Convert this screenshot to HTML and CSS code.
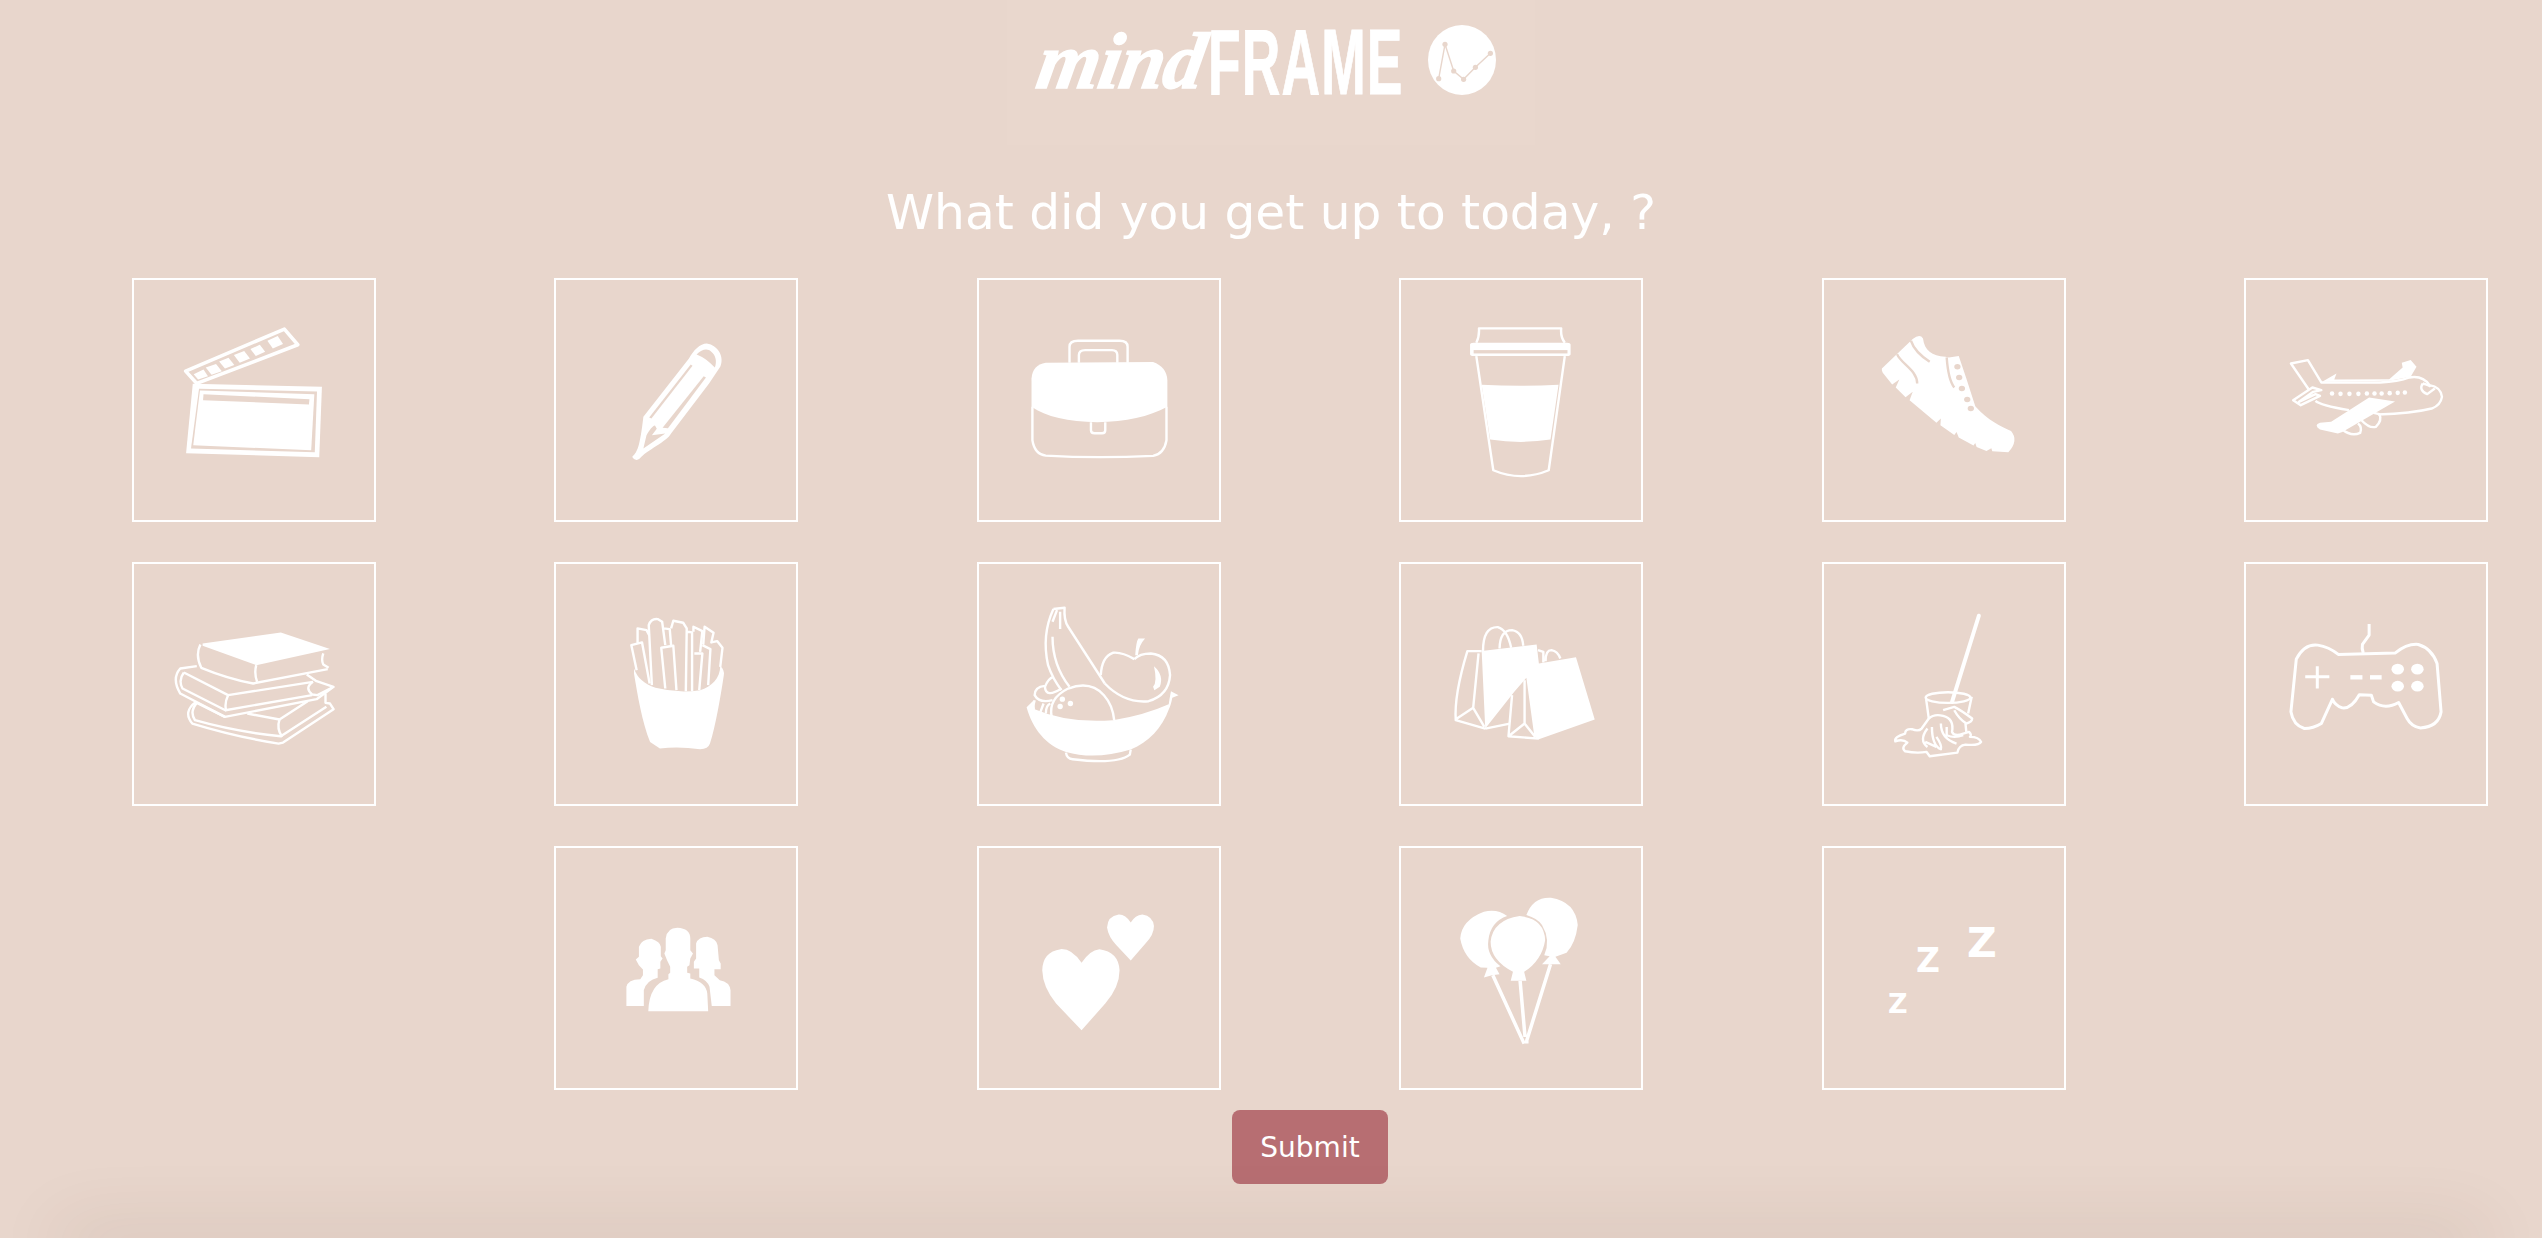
FILE: index.html
```html
<!DOCTYPE html>
<html lang="en">

<head>
    <meta charset="UTF-8">
    <meta name="viewport" content="width=device-width, initial-scale=1.0">
    <title>mindFRAME</title>
    <link rel="stylesheet" href="styles.css">
</head>

<body>
    <header class="brand">
        <div class="logo">
            <span class="logo-mind"><span class="logo-mind-text">mind</span></span>
            <span class="logo-frame"><span class="logo-frame-text">FRAME</span></span>
            <svg class="logo-mark" viewBox="0 0 68 70">
                <ellipse class="solid" cx="34" cy="35" rx="34" ry="35" />
                <polyline class="mark-line" points="10.7,53.7 17,19.3 25.7,46 35.6,54.3 47.4,42.3 62.4,28.3" />
                <circle class="cut" cx="10.7" cy="53.7" r="2.6" />
                <circle class="cut" cx="17" cy="19.3" r="2.6" />
                <circle class="cut" cx="25.7" cy="46" r="2.6" />
                <circle class="cut" cx="35.6" cy="54.3" r="2.6" />
                <circle class="cut" cx="47.4" cy="42.3" r="2.6" />
                <circle class="cut" cx="62.4" cy="28.3" r="2.6" />
            </svg>
        </div>
    </header>

    <h1 class="question">What did you get up to today, ?</h1>

    <div class="activities">
        <!-- movies -->
        <div class="tile">
            <svg viewBox="27 24 546 731" preserveAspectRatio="none">
                <polygon class="line thick" points="147,303 368,177 398,224 172,340" />
                <polygon class="solid" points="165,312 187,298 197,318 175,328" />
                <polygon class="solid" points="192,292 215,282 228,303 205,314" />
                <polygon class="solid" points="222,274 243,263 256,285 235,295" />
                <polygon class="solid" points="255,255 278,243 291,265 268,278" />
                <polygon class="solid" points="292,237 313,224 325,245 304,258" />
                <polygon class="solid" points="330,212 353,198 365,222 342,235" />
                <polygon class="solid" points="163,341 452,350 446,561 148,549" />
                <polygon class="cut" points="177,356 441,364 436,546 159,535" />
                <polygon class="solid" points="179,361 435,372 428,540 164,525" />
                <polygon class="cut" points="187,372 424,387 423,403 186,390" />
            </svg>
        </div>
        <!-- writing -->
        <div class="tile">
            <svg viewBox="973 24 546 731" preserveAspectRatio="none">
                <path class="solid" d="M1148,560 C1160,545 1165,530 1173,440 L1275,265 C1285,240 1300,220 1315,220 C1340,225 1355,260 1345,290 L1320,340 L1235,490 C1225,515 1180,540 1165,565 Q1155,575 1148,560 Z" />
                <path class="cut" d="M1292,253 C1305,235 1318,235 1325,245 C1335,255 1338,275 1333,292 C1320,275 1310,262 1292,253 Z" />
                <polygon class="cut" points="1279,283 1283,287 1191,445 1186,442" />
                <polygon class="cut" points="1308,318 1313,322 1228,474 1216,473" />
                <path class="cut" d="M1180,495 C1187,480 1193,467 1199,466 L1203,476 L1192,495 L1222,490 L1173,535 Z" />
            </svg>
        </div>
        <!-- work -->
        <div class="tile">
            <svg viewBox="36 24 546 731" preserveAspectRatio="none">
                <path class="line" d="M243,278 V230 Q243,212 262,212 H355 Q373,212 373,230 V278" />
                <path class="line" d="M264,278 V255 Q264,240 278,240 H338 Q350,240 350,255 V278" />
                <path class="solid" d="M158,410 V325 Q160,285 190,278 L430,276 Q460,290 462,330 V410 C420,440 370,455 305,456 C240,455 190,440 158,410 Z" />
                <path class="line" d="M160,410 V510 Q165,552 190,556 Q300,565 430,557 Q455,550 460,510 V410" />
                <path class="line" d="M291,456 V480 Q291,489 299,489 H316 Q323,489 323,480 V456" />
            </svg>
        </div>
        <!-- coffee -->
        <div class="tile">
            <svg viewBox="987 24 546 731" preserveAspectRatio="none">
                <path class="line" d="M1160,218 Q1167,200 1166,175 H1350 Q1348,200 1358,218" />
                <rect class="solid" x="1146" y="218" width="225" height="40" rx="8" ry="6" />
                <rect class="cut" x="1154" y="240" width="210" height="10" />
                <path class="line" d="M1160,258 L1198,600 Q1260,635 1322,600 L1358,258" />
                <path class="solid" d="M1172,344 Q1260,350 1344,344 L1326,508 Q1260,522 1191,508 Z" />
            </svg>
        </div>
        <!-- running -->
        <div class="tile">
            <svg viewBox="49 24 546 731" preserveAspectRatio="none">
                <path class="solid" d="M252,207 Q268,190 275,205 C278,240 295,258 325,260 L333,262 L355,258 L372,325 L392,408 C420,450 450,470 472,482 Q490,510 466,546 L430,543 L428,534 L417,542 L395,530 L392,518 L388,526 L355,502 L350,485 L345,494 L314,465 L315,445 L305,458 L245,390 L252,365 L236,381 L214,352 L222,328 L206,343 L185,308 Q182,300 183,295 Z" />
                <path class="line cut-line" d="M217,252 C225,280 262,300 262,340" />
                <path class="line cut-line" d="M248,212 C255,240 275,262 290,275" />
                <path class="line cut-line" d="M328,262 C330,300 335,335 345,352" />
                <ellipse class="cut" cx="352" cy="290" rx="7" ry="8" />
                <ellipse class="cut" cx="356" cy="322" rx="7" ry="8" />
                <ellipse class="cut" cx="362" cy="355" rx="7" ry="8" />
                <ellipse class="cut" cx="374" cy="388" rx="7" ry="8" />
                <ellipse class="cut" cx="382" cy="415" rx="7" ry="8" />
            </svg>
        </div>
        <!-- travel -->
        <div class="tile">
            <svg viewBox="995 24 546 731" preserveAspectRatio="none">
                <path class="line" d="M1140,358 L1100,280 L1138,270 L1168,337 H1300 Q1340,335 1365,322 Q1395,315 1410,345 Q1435,350 1438,380 Q1435,405 1415,415 Q1370,430 1295,433" />
                <path class="line" d="M1155,392 Q1165,405 1230,420" />
                <polygon class="solid" points="1170,335 1202,310 1197,328 1320,327 1350,292 1348,278 1368,270 1381,290 1368,320 1320,332" />
                <path class="line" d="M1168,360 L1148,352 L1105,390 L1122,405 L1165,377 L1155,372 L1118,395 L1150,365 Z" />
                <ellipse class="solid" cx="1192" cy="370" rx="5" ry="7" />
                <ellipse class="solid" cx="1211" cy="371" rx="5" ry="7" />
                <ellipse class="solid" cx="1231" cy="371" rx="5" ry="7" />
                <ellipse class="solid" cx="1251" cy="371" rx="5" ry="7" />
                <ellipse class="solid" cx="1270" cy="370" rx="5" ry="7" />
                <ellipse class="solid" cx="1287" cy="370" rx="5" ry="7" />
                <ellipse class="solid" cx="1303" cy="370" rx="5" ry="7" />
                <ellipse class="solid" cx="1321" cy="369" rx="5" ry="7" />
                <ellipse class="solid" cx="1339" cy="368" rx="5" ry="7" />
                <ellipse class="solid" cx="1355" cy="367" rx="5" ry="7" />
                <path class="solid" d="M1275,382 L1333,394 L1215,485 L1205,490 L1165,478 Q1150,465 1165,458 L1190,455 Z" />
                <path class="line" d="M1258,450 Q1275,475 1290,470 Q1305,450 1298,432 L1285,428" />
                <path class="line" d="M1215,478 Q1235,500 1255,488 Q1260,470 1250,460" />
                <path class="line" d="M1395,340 Q1385,360 1405,372 L1422,355 M1395,340 Q1410,345 1413,350" />
            </svg>
        </div>

        <!-- reading -->
        <div class="tile">
            <svg viewBox="27 21 546 731" preserveAspectRatio="none">
                <path class="solid" d="M185,265 L360,232 L470,282 L305,330 L185,272 Z" />
                <path class="line" d="M180,268 Q168,300 182,338 Q240,370 298,385 L465,342" />
                <path class="line" d="M305,330 Q300,355 307,380 M455,295 Q450,315 455,328 L467,338" />
                <path class="line" d="M172,333 L135,340 Q115,370 135,415 L235,485 L440,432 L478,395 L440,378 L418,358" />
                <path class="line" d="M143,352 L242,420 L432,380 M143,352 Q130,375 140,400 L236,465 L430,420" />
                <path class="line" d="M242,420 Q233,445 238,468 M432,380 Q412,398 430,418 L442,420 L475,397" />
                <path class="line" d="M170,440 Q140,470 162,505 Q260,545 355,565 L365,562 L478,462 L470,445 L460,443 V415" />
                <path class="line" d="M172,443 L235,485 M285,475 L357,493 L420,438" />
                <path class="line" d="M172,443 Q155,470 168,495 Q260,530 360,543 L462,455" />
                <path class="line" d="M357,493 Q350,520 363,545" />
            </svg>
        </div>
        <!-- fast food -->
        <div class="tile">
            <svg viewBox="973 21 546 731" preserveAspectRatio="none">
                <path class="solid" d="M1152,340 C1160,370 1175,385 1200,398 Q1250,415 1300,405 C1325,395 1345,370 1345,332 Q1355,345 1353,360 C1345,430 1335,510 1322,565 Q1318,582 1300,582 Q1250,572 1210,580 L1188,560 C1170,500 1160,420 1152,355 Z" />
                <path class="line" d="M1158,345 L1146,270 L1170,262 L1187,385 M1160,262 V220 L1180,225 L1186,240" />
                <path class="line" d="M1192,390 L1185,210 Q1190,190 1205,192 L1215,200 L1222,270 M1218,220 L1232,222 L1235,270" />
                <path class="line" d="M1222,400 L1213,278 L1240,272 L1247,405" />
                <path class="line" d="M1235,220 L1240,197 L1262,203 L1270,220 L1268,408 M1272,230 L1282,232 L1282,408" />
                <path class="line" d="M1285,230 V215 L1305,228 L1300,290 M1298,405 L1305,295 L1287,295" />
                <path class="line" d="M1307,268 L1310,215 L1330,233 L1325,262 L1338,258 L1350,278 L1345,335 M1305,270 L1323,282 L1318,390" />
            </svg>
        </div>
        <!-- healthy food -->
        <div class="tile">
            <svg viewBox="36 21 546 731" preserveAspectRatio="none">
                <path class="line" d="M207,162 L232,158 Q230,195 240,215 L322,385 M207,162 Q180,240 195,330 Q205,370 225,405" />
                <path class="line" d="M205,245 Q205,330 243,395 M215,165 L205,200 M222,170 L222,222" />
                <path class="line" d="M388,312 Q360,290 340,293 Q315,305 313,360 M322,385 Q365,445 420,438 Q465,420 468,360 Q465,300 425,295 Q400,295 388,312" />
                <path class="solid" d="M390,300 Q392,260 397,250 L412,250 Q398,270 396,300 Z" />
                <path class="solid" d="M432,333 Q455,360 445,395 L433,405 L430,395 Q440,380 432,333 Z" />
                <path class="line" d="M203,485 Q195,430 240,400 Q290,375 320,420 Q340,450 343,495" />
                <ellipse class="solid" cx="227" cy="432" rx="6" ry="8" />
                <ellipse class="solid" cx="245" cy="445" rx="6" ry="8" />
                <ellipse class="solid" cx="222" cy="454" rx="6" ry="8" />
                <path class="line" d="M225,400 Q190,430 188,395 Q195,370 207,365 M188,392 Q165,395 165,420 Q175,445 205,435" />
                <path class="line" d="M165,435 Q160,460 165,462 M185,445 L178,470 M200,445 Q190,450 190,475" />
                <path class="solid" d="M147,456 L163,435 L165,462 Q240,505 340,495 Q410,480 465,447 L467,430 L470,408 L487,420 L473,428 Q470,450 466,460 C450,520 420,560 380,583 Q300,615 235,590 C190,570 160,520 147,456 Z" />
                <path class="line" d="M235,592 Q237,610 250,612 Q350,628 378,598 L380,583" />
            </svg>
        </div>
        <!-- shopping -->
        <div class="tile">
            <svg viewBox="987 21 546 731" preserveAspectRatio="none">
                <path class="line" d="M1175,288 Q1175,215 1208,216 Q1230,225 1238,278 M1212,280 Q1213,225 1240,225 Q1263,230 1265,272" />
                <path class="line" d="M1298,285 L1310,290 V322 M1315,318 Q1315,285 1328,285 Q1342,288 1348,310" />
                <polygon class="solid" points="1172,288 1295,268 1300,325 1383,306 1425,493 1300,552 1290,545 1272,368 1245,410 1180,520" />
                <path class="line" d="M1172,288 H1140 Q1110,420 1114,495 L1180,520 M1165,295 L1153,458 L1114,492 M1153,458 L1178,515 M1180,520 L1235,505" />
                <path class="line" d="M1240,420 L1232,543 L1300,550 M1268,375 V505 L1235,540 M1268,505 L1292,545" />
            </svg>
        </div>
        <!-- cleaning -->
        <div class="tile">
            <svg viewBox="49 21 546 731" preserveAspectRatio="none">
                <path class="line handle" d="M400,182 L340,440" />
                <ellipse class="line" cx="331" cy="427" rx="50" ry="16" />
                <path class="line" d="M282,432 L288,490 M384,425 L376,475" />
                <path class="line" d="M288,490 Q300,475 320,482 Q345,490 340,530 Q345,545 365,535 L378,530 Q385,540 380,545 Q400,545 405,560 Q400,572 370,568 Q355,570 352,592 L290,603 L283,590 Q260,595 235,588 Q225,578 240,562 Q230,550 213,558 Q210,545 235,535 Q235,520 250,522 Q265,530 272,520 Z" />
                <path class="line" d="M370,505 L372,530 M320,465 L345,455 Q360,465 385,490 Q385,500 372,505 Q355,490 345,465" />
                <path class="line" d="M285,520 Q265,555 285,575 M295,515 Q295,570 315,582 Q318,570 305,545 M315,505 Q315,550 350,565 M328,515 V540 Q345,550 365,540 M280,560 L305,575" />
            </svg>
        </div>
        <!-- gaming -->
        <div class="tile">
            <svg viewBox="995 21 546 731" preserveAspectRatio="none">
                <path class="line heavy" d="M1206,298 L1333,294 Q1360,265 1385,268 Q1415,280 1427,325 L1436,470 Q1430,515 1390,518 Q1370,515 1360,490 L1341,442 Q1310,465 1285,440 L1280,420 L1253,419 Q1235,462 1215,458 Q1198,450 1193,432 L1168,505 Q1150,520 1130,520 Q1105,510 1100,470 L1112,312 Q1130,265 1160,270 Q1185,275 1206,298 Z" />
                <path class="line heavy" d="M1275,207 V240 L1260,268 Q1258,280 1262,294" />
                <path class="line heavy" d="M1159,333 V400 M1132,365 H1186" />
                <rect class="solid" x="1233" y="360" width="27" height="13" />
                <rect class="solid" x="1277" y="360" width="26" height="13" />
                <ellipse class="solid" cx="1339" cy="342" rx="14" ry="16" />
                <ellipse class="solid" cx="1383" cy="342" rx="14" ry="16" />
                <ellipse class="solid" cx="1339" cy="393" rx="14" ry="16" />
                <ellipse class="solid" cx="1383" cy="393" rx="14" ry="16" />
            </svg>
        </div>

        <!-- friends -->
        <div class="tile tile-offset">
            <svg viewBox="32 18 546 731" preserveAspectRatio="none">
                <path class="solid" d="M282,295 Q285,263 308,263 Q337,265 337,295 V330 L343,340 L337,355 L335,375 L330,380 V398 L337,400 V415 Q372,425 375,460 L377,513 H243 Q245,430 288,417 V402 L292,398 V380 L285,360 L279,340 L282,330 Z" />
                <path class="solid" d="M222,320 Q228,297 250,296 Q270,305 271,320 V348 L275,355 L270,365 V385 L264,387 V413 Q240,420 233,450 V497 H194 V440 Q197,418 225,417 L231,405 V388 L222,375 L215,358 L222,350 Z" />
                <path class="solid" d="M350,310 Q355,290 375,290 Q395,295 398,315 L401,360 L405,370 V387 H391 V405 L403,420 Q425,425 427,450 V497 H385 L380,440 Q375,420 357,412 V385 H345 V365 L350,355 Z" />
            </svg>
        </div>
        <!-- love -->
        <div class="tile">
            <svg viewBox="978 18 546 731" preserveAspectRatio="none">
                <path class="solid" d="M1212,368 Q1190,325 1165,327 Q1125,335 1124,390 Q1125,440 1155,490 L1212,570 L1265,490 Q1297,440 1297,390 Q1295,335 1252,327 Q1230,330 1212,368 Z" />
                <path class="solid" d="M1322,247 Q1310,222 1295,223 Q1270,228 1269,262 Q1272,290 1290,315 L1322,361 L1355,310 Q1374,285 1374,258 Q1372,228 1348,223 Q1332,225 1322,247 Z" />
            </svg>
        </div>
        <!-- party -->
        <div class="tile">
            <svg viewBox="45 18 546 731" preserveAspectRatio="none">
                <path class="solid" d="M287,228 Q265,205 235,215 Q185,240 182,295 Q190,355 228,382 L243,383 L235,412 L253,405 L270,402 L262,383 L272,378 Q240,345 245,300 Q250,245 287,228 Z" />
                <path class="solid" d="M330,225 Q345,170 385,173 Q440,185 445,255 Q440,310 420,338 L395,350 L407,372 L365,372 L382,348 L370,345 Q385,300 365,255 Q355,235 330,225 Z" />
                <path class="solid" d="M315,228 Q370,235 372,300 Q365,360 325,395 L330,422 L295,422 L300,395 Q250,360 250,305 Q255,240 315,228 Z" />
                <path class="line thick" d="M255,405 L325,610 M316,422 L327,590 M384,372 L331,600 V610" />
            </svg>
        </div>
        <!-- sleep -->
        <div class="tile">
            <svg viewBox="0 0 244 244">
                <text class="zed" x="145" y="111" font-size="41">Z</text>
                <text class="zed" x="94" y="126" font-size="33">Z</text>
                <text class="zed" x="66" y="167" font-size="27">Z</text>
            </svg>
        </div>
    </div>

    <button class="submit">Submit</button>

    <div class="page-edge"></div>
</body>

</html>
```

FILE: styles.css
```css
* {
    box-sizing: border-box;
}

body {
    position: relative;
    height: 100vh;
    margin: 0;
    overflow: hidden;
    background: #e8d6cc;
    color: white;
    font-family: "DejaVu Sans", sans-serif;
}

.brand {
    width: 528px;
    height: 145px;
    margin: 0 auto;
    padding: 25px 0 0 32px;
    background: #e9d7cd;
}

.logo {
    display: flex;
    align-items: flex-start;
}

.logo-mind {
    width: 169px;
    margin-top: -11px;
    font-family: "Liberation Serif", serif;
    font-size: 80px;
    font-style: italic;
    font-weight: bold;
    line-height: 94px;
}

.logo-mind-text {
    display: inline-block;
    -webkit-text-stroke: 1.5px white;
    letter-spacing: -1px;
    transform: skewX(-10deg);
}

.logo-frame {
    width: 201px;
    margin-top: -10px;
    font-family: "Liberation Sans", sans-serif;
    font-size: 92px;
    font-weight: bold;
    line-height: 94px;
}

.logo-frame-text {
    display: inline-block;
    -webkit-text-stroke: 1px white;
    letter-spacing: 2px;
    transform: scaleX(0.58);
    transform-origin: left center;
}

.logo-mark {
    width: 68px;
    height: 70px;
    margin-left: 19px;
}

.mark-line {
    fill: none;
    stroke: #e8d6cc;
    stroke-width: 1.4;
}

.question {
    margin: 39px 0 0;
    font-size: 48.6px;
    font-weight: normal;
    line-height: 56px;
    text-align: center;
}

.activities {
    display: grid;
    grid-template-columns: repeat(6, 244px);
    column-gap: 178.4px;
    row-gap: 40px;
    margin-top: 38px;
    padding-left: 132px;
}

.tile {
    height: 244px;
    box-shadow: inset 0 0 0 2px white;
}

.tile-offset {
    grid-column-start: 2;
}

.tile svg {
    display: block;
    width: 244px;
    height: 244px;
}

.solid {
    fill: white;
}

.cut {
    fill: #e8d6cc;
}

.line {
    fill: none;
    stroke: white;
    stroke-width: 2.4;
    stroke-linejoin: round;
    vector-effect: non-scaling-stroke;
}

.heavy {
    stroke-width: 3;
}

.thick {
    stroke-width: 3.5;
}

.handle {
    stroke-width: 4;
    stroke-linecap: round;
}

.cut-line {
    stroke: #e8d6cc;
}

.zed {
    fill: white;
    font-family: "DejaVu Sans", sans-serif;
    font-weight: bold;
}

.submit {
    display: block;
    width: 156px;
    height: 74px;
    margin: 20px 0 0 1232px;
    padding: 0;
    border: none;
    border-radius: 8px;
    background: #b76e72;
    color: white;
    font-family: "DejaVu Sans", sans-serif;
    font-size: 28px;
}

/* shadow of whatever sits just under the fold */
.page-edge {
    position: absolute;
    top: 100%;
    left: 60px;
    right: 60px;
    height: 20px;
    box-shadow: 0 -4px 70px rgba(80, 50, 30, 0.2);
}
```
